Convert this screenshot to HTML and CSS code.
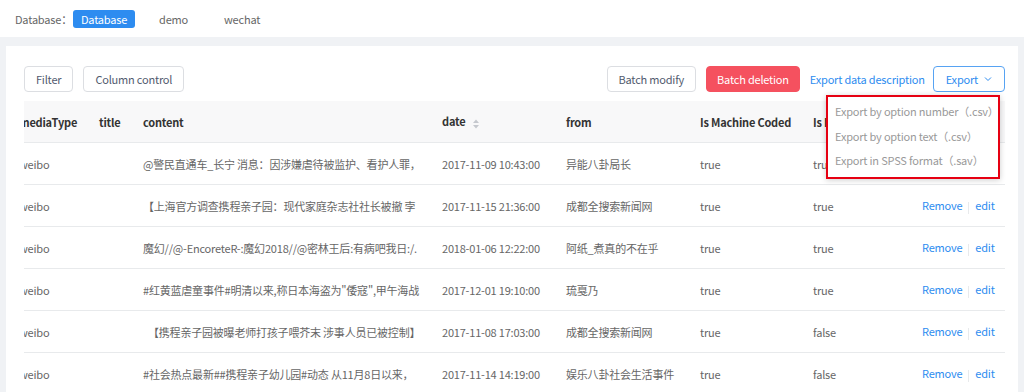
FILE: index.html
```html
<!DOCTYPE html>
<html lang="zh">

<head>
    <meta charset="UTF-8">
    <meta name="viewport" content="width=device-width, initial-scale=1.0">
    <title>Data</title>
    <link rel="stylesheet" href="styles.css">
</head>

<body>

    <div class="topbar">
        <span class="db-label">Database：</span>
        <span class="db-tab active">Database</span>
        <span class="db-tab">demo</span>
        <span class="db-tab">wechat</span>
    </div>

    <div class="page">
        <div class="card">
            <div class="toolbar">
                <div class="tools-left">
                    <button class="btn">Filter</button>
                    <button class="btn">Column control</button>
                </div>
                <div class="tools-right">
                    <button class="btn">Batch modify</button>
                    <button class="btn btn-red">Batch deletion</button>
                    <a class="link">Export data description</a>
                    <div class="export">
                        <button class="btn btn-blue">Export
                            <svg width="10" height="10" viewBox="0 0 10 10"><path d="M2 3.5 L5 6.5 L8 3.5" fill="none" stroke="#2d8cf0" stroke-width="1"/></svg>
                        </button>
                        <div class="dropdown">
                            <div class="dd-item">Export by option number（.csv）</div>
                            <div class="dd-item">Export by option text（.csv）</div>
                            <div class="dd-item">Export in SPSS format（.sav）</div>
                        </div>
                    </div>
                </div>
            </div>

            <div class="table-wrap">
                <table class="grid">
                    <colgroup>
                        <col style="width:80px">
                        <col style="width:44px">
                        <col style="width:299px">
                        <col style="width:124px">
                        <col style="width:134px">
                        <col style="width:113px">
                        <col style="width:109px">
                        <col style="width:101px">
                    </colgroup>
                    <thead>
                        <tr>
                            <th>mediaType</th>
                            <th>title</th>
                            <th>content</th>
                            <th>date <span class="sort"><svg width="8" height="12" viewBox="0 0 8 12"><path d="M4 1.5 L7 5 L1 5 Z M4 10.5 L7 7 L1 7 Z" fill="#c5c8ce"/></svg></span></th>
                            <th>from</th>
                            <th>Is Machine Coded</th>
                            <th>Is Manually Coded</th>
                            <th></th>
                        </tr>
                    </thead>
                    <tbody>
                        <tr>
                            <td>weibo</td><td></td>
                            <td class="content">@警民直通车_长宁 消息：因涉嫌虐待被监护、看护人罪，</td>
                            <td>2017-11-09 10:43:00</td><td>异能八卦局长</td><td>true</td><td>true</td>
                            <td><a class="act">Remove</a><span class="sep"></span><a class="act">edit</a></td>
                        </tr>
                        <tr>
                            <td>weibo</td><td></td>
                            <td class="content">【上海官方调查携程亲子园：现代家庭杂志社社长被撤 孛</td>
                            <td>2017-11-15 21:36:00</td><td>成都全搜索新闻网</td><td>true</td><td>true</td>
                            <td><a class="act">Remove</a><span class="sep"></span><a class="act">edit</a></td>
                        </tr>
                        <tr>
                            <td>weibo</td><td></td>
                            <td class="content">魔幻//@-EncoreteR-:魔幻2018//@密林王后:有病吧我日:/.</td>
                            <td>2018-01-06 12:22:00</td><td>阿纸_煮真的不在乎</td><td>true</td><td>true</td>
                            <td><a class="act">Remove</a><span class="sep"></span><a class="act">edit</a></td>
                        </tr>
                        <tr>
                            <td>weibo</td><td></td>
                            <td class="content">#红黄蓝虐童事件#明清以来,称日本海盗为"倭寇",甲午海战</td>
                            <td>2017-12-01 19:10:00</td><td>琉戛乃</td><td>true</td><td>true</td>
                            <td><a class="act">Remove</a><span class="sep"></span><a class="act">edit</a></td>
                        </tr>
                        <tr>
                            <td>weibo</td><td></td>
                            <td class="content short">【携程亲子园被曝老师打孩子喂芥末 涉事人员已被控制】</td>
                            <td>2017-11-08 17:03:00</td><td>成都全搜索新闻网</td><td>true</td><td>false</td>
                            <td><a class="act">Remove</a><span class="sep"></span><a class="act">edit</a></td>
                        </tr>
                        <tr>
                            <td>weibo</td><td></td>
                            <td class="content">#社会热点最新##携程亲子幼儿园#动态 从11月8日以来，</td>
                            <td>2017-11-14 14:19:00</td><td>娱乐八卦社会生活事件</td><td>true</td><td>false</td>
                            <td><a class="act">Remove</a><span class="sep"></span><a class="act">edit</a></td>
                        </tr>
                    </tbody>
                </table>
            </div>
        </div>
    </div>

</body>

</html>
```

FILE: styles.css
```css
body {
    margin: 0;
    font-family: "Noto Sans CJK SC", "Noto Sans", sans-serif;
    font-size: 11px;
    letter-spacing: -0.2px;
    color: #666;
    background: #f0f2f5;
    height: 392px;
    overflow: hidden;
}

.topbar {
    height: 37px;
    background: #fff;
    display: flex;
    align-items: center;
    padding-left: 15px;
}

.db-label {
    margin-right: 1px;
}

.db-tab {
    padding: 0 12px;
    height: 18px;
    line-height: 18px;
    margin-right: 12px;
    border-radius: 3px;
}

.db-tab.active {
    background: #2d8cf0;
    color: #fff;
    padding: 0 8px;
}

.page {
    padding: 9px 6px 0 6px;
}

.card {
    background: #fff;
    padding: 20px 13px 0 18px;
    height: 400px;
}

.toolbar {
    display: flex;
    justify-content: space-between;
    align-items: center;
    margin-bottom: 9px;
}

.tools-left, .tools-right {
    display: flex;
    align-items: center;
    gap: 10px;
}

.btn {
    font-family: inherit;
    font-size: 11px;
    letter-spacing: -0.2px;
    height: 26px;
    padding: 0 11px;
    border: 1px solid #dcdee2;
    border-radius: 4px;
    background: #fff;
    color: #515a6e;
    display: flex;
    align-items: center;
    gap: 6px;
}

.btn-red {
    background: #f5515f;
    border-color: #f5515f;
    color: #fff;
    padding: 0 10px;
}

.btn-blue {
    border-color: #57a3f3;
    color: #2d8cf0;
    padding: 0 11px 0 12px;
    gap: 5px;
}

.link {
    color: #2d8cf0;
    margin-right: -2px;
}

.export {
    position: relative;
}

.dropdown {
    position: absolute;
    top: 29px;
    right: 5px;
    width: 170px;
    padding: 2px 0 4px;
    background: #fff;
    border: 2px solid #e60012;
    box-shadow: 0 1px 6px rgba(0, 0, 0, 0.2);
    z-index: 10;
}

.dd-item {
    padding: 0 7px;
    height: 24.5px;
    line-height: 24.5px;
    color: #999;
    white-space: nowrap;
}

.table-wrap {
    overflow: hidden;
}

.grid {
    border-collapse: collapse;
    table-layout: fixed;
    margin-left: -23px;
    width: 1004px;
}

.grid th {
    background: #f8f8f9;
    color: #333;
    font-weight: bold;
    text-align: left;
    height: 41px;
    padding: 0 0 0 18px;
    border-bottom: 1px solid #e8eaec;
    white-space: nowrap;
    overflow: hidden;
}

.grid td {
    height: 41px;
    padding: 0 0 0 18px;
    border-bottom: 1px solid #e8eaec;
    white-space: nowrap;
    overflow: hidden;
}

.grid td.content {
    padding-right: 6px;
}

.grid td.short {
    padding-left: 23px;
}

.sort {
    display: inline-block;
    vertical-align: middle;
    margin-left: 4px;
}

.sort svg {
    display: block;
}

.act {
    color: #2d8cf0;
}

.sep {
    display: inline-block;
    width: 1px;
    height: 12px;
    background: #e8eaec;
    margin: 0 6px;
    vertical-align: middle;
}
```
